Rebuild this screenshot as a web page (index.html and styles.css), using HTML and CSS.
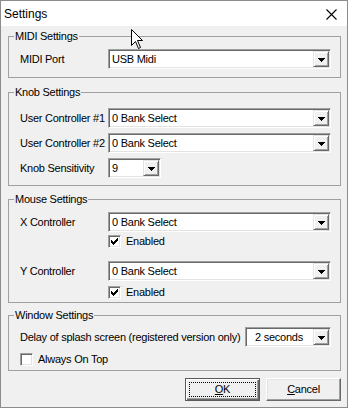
FILE: index.html
```html
<!DOCTYPE html>
<html>
<head>
<meta charset="utf-8">
<link rel="stylesheet" href="styles.css">
</head>
<body>
<div class="window">
  <div class="titlebar">
    <span class="title">Settings</span>
    <svg class="close" width="11" height="11" viewBox="0 0 11 11"><path d="M0.5 0.5 L10.5 10.5 M10.5 0.5 L0.5 10.5" stroke="#000" stroke-width="1.1" fill="none"/></svg>
  </div>
  <div class="content">
    <fieldset class="group g-midi">
      <legend>MIDI Settings</legend>
      <div class="grid">
        <span class="label">MIDI Port</span>
        <div class="combo"><span class="val">USB Midi</span><span class="drop"><svg width="7" height="4" viewBox="0 0 7 4" shape-rendering="crispEdges"><rect x="0" y="0" width="7" height="1"/><rect x="1" y="1" width="5" height="1"/><rect x="2" y="2" width="3" height="1"/><rect x="3" y="3" width="1" height="1"/></svg></span></div>
      </div>
    </fieldset>

    <fieldset class="group g-knob">
      <legend>Knob Settings</legend>
      <div class="grid rows">
        <span class="label">User Controller #1</span>
        <div class="combo"><span class="val">0 Bank Select</span><span class="drop"><svg width="7" height="4" viewBox="0 0 7 4" shape-rendering="crispEdges"><rect x="0" y="0" width="7" height="1"/><rect x="1" y="1" width="5" height="1"/><rect x="2" y="2" width="3" height="1"/><rect x="3" y="3" width="1" height="1"/></svg></span></div>
        <span class="label">User Controller #2</span>
        <div class="combo"><span class="val">0 Bank Select</span><span class="drop"><svg width="7" height="4" viewBox="0 0 7 4" shape-rendering="crispEdges"><rect x="0" y="0" width="7" height="1"/><rect x="1" y="1" width="5" height="1"/><rect x="2" y="2" width="3" height="1"/><rect x="3" y="3" width="1" height="1"/></svg></span></div>
        <span class="label">Knob Sensitivity</span>
        <div class="combo small"><span class="val">9</span><span class="drop"><svg width="7" height="4" viewBox="0 0 7 4" shape-rendering="crispEdges"><rect x="0" y="0" width="7" height="1"/><rect x="1" y="1" width="5" height="1"/><rect x="2" y="2" width="3" height="1"/><rect x="3" y="3" width="1" height="1"/></svg></span></div>
      </div>
    </fieldset>

    <fieldset class="group g-mouse">
      <legend>Mouse Settings</legend>
      <div class="grid">
        <span class="label">X Controller</span>
        <div class="combo"><span class="val">0 Bank Select</span><span class="drop"><svg width="7" height="4" viewBox="0 0 7 4" shape-rendering="crispEdges"><rect x="0" y="0" width="7" height="1"/><rect x="1" y="1" width="5" height="1"/><rect x="2" y="2" width="3" height="1"/><rect x="3" y="3" width="1" height="1"/></svg></span></div>
        <div class="check c-first"><span class="cb"><svg width="7" height="7" viewBox="0 0 7 7" shape-rendering="crispEdges"><rect x="6" y="0" width="1" height="3"/><rect x="5" y="1" width="1" height="3"/><rect x="4" y="2" width="1" height="3"/><rect x="3" y="3" width="1" height="3"/><rect x="2" y="4" width="1" height="3"/><rect x="1" y="3" width="1" height="3"/><rect x="0" y="2" width="1" height="3"/></svg></span><span>Enabled</span></div>
        <span class="label y-label">Y Controller</span>
        <div class="combo y-combo"><span class="val">0 Bank Select</span><span class="drop"><svg width="7" height="4" viewBox="0 0 7 4" shape-rendering="crispEdges"><rect x="0" y="0" width="7" height="1"/><rect x="1" y="1" width="5" height="1"/><rect x="2" y="2" width="3" height="1"/><rect x="3" y="3" width="1" height="1"/></svg></span></div>
        <div class="check c-second"><span class="cb"><svg width="7" height="7" viewBox="0 0 7 7" shape-rendering="crispEdges"><rect x="6" y="0" width="1" height="3"/><rect x="5" y="1" width="1" height="3"/><rect x="4" y="2" width="1" height="3"/><rect x="3" y="3" width="1" height="3"/><rect x="2" y="4" width="1" height="3"/><rect x="1" y="3" width="1" height="3"/><rect x="0" y="2" width="1" height="3"/></svg></span><span>Enabled</span></div>
      </div>
    </fieldset>

    <fieldset class="group g-window">
      <legend>Window Settings</legend>
      <div class="split">
        <span class="label">Delay of splash screen (registered version only)</span>
        <div class="combo delay"><span class="val">2 seconds</span><span class="drop"><svg width="7" height="4" viewBox="0 0 7 4" shape-rendering="crispEdges"><rect x="0" y="0" width="7" height="1"/><rect x="1" y="1" width="5" height="1"/><rect x="2" y="2" width="3" height="1"/><rect x="3" y="3" width="1" height="1"/></svg></span></div>
      </div>
      <div class="check c-top"><span class="cb"></span><span>Always On Top</span></div>
    </fieldset>

    <div class="buttons">
      <div class="btn default"><span><u>O</u>K</span></div>
      <div class="btn"><span><u>C</u>ancel</span></div>
    </div>
  </div>
  <svg class="cursor" width="13" height="20" viewBox="0 0 13 20"><path d="M0.5 0.5 V16.5 L4.5 12.5 L7.5 19.5 L9.5 18.5 L6.5 11.5 H11.5 Z" fill="#fff" stroke="#000" stroke-width="1" stroke-linejoin="miter"/></svg>
</div>
</body>
</html>
```
FILE: styles.css
```css
* { box-sizing: border-box; }
html, body { margin: 0; padding: 0; }
body {
  font-family: "Liberation Sans", Arial, sans-serif;
  font-size: 11px;
  letter-spacing: -0.25px;
  color: #000;
  background: #fff;
}
.window {
  width: 348px;
  height: 408px;
  border: 1px solid #8c8c8c;
  background: #f0f0f0;
  position: relative;
  display: flex;
  flex-direction: column;
}
.titlebar {
  height: 25px;
  flex: none;
  background: #fff;
  display: flex;
  align-items: center;
  justify-content: space-between;
  padding: 0 10px 0 3px;
}
.title { font-size: 12px; letter-spacing: 0; }
.close { display: block; margin-top: 2px; }
.content {
  padding: 4px 6px 0 7px;
  display: flex;
  flex-direction: column;
}
.group {
  margin: 0;
  min-width: 0;
  border: 1px solid #a0a0a0;
  padding: 0 9px 0 11px;
}
.group legend {
  padding: 0 1px;
  margin-left: -6px;
  line-height: 13px;
  height: 13px;
}
.g-midi { padding-top: 6px; padding-bottom: 8px; }
.g-knob { margin-top: 8px; padding-top: 9px; padding-bottom: 7px; }
.g-mouse { margin-top: 7px; padding-top: 6px; padding-bottom: 3px; }
.g-window { margin-top: 6px; padding-top: 5px; padding-bottom: 4px; }

.grid {
  display: grid;
  grid-template-columns: 88px 1fr;
  align-items: center;
}
.rows { row-gap: 5px; }
.label { white-space: nowrap; line-height: 13px; }

.combo {
  height: 20px;
  background: #fff;
  border: 1px solid;
  border-color: #a0a0a0 #fff #fff #a0a0a0;
  box-shadow: inset 1px 1px #696969, inset -1px -1px #e3e3e3;
  padding: 1px;
  display: flex;
  align-items: stretch;
}
.combo.small { width: 53px; }
.combo .val {
  flex: 1;
  padding-left: 2px;
  line-height: 16px;
  white-space: nowrap;
  overflow: hidden;
}
.drop {
  width: 16px;
  flex: none;
  background: #f0f0f0;
  border: 1px solid;
  border-color: #e3e3e3 #696969 #696969 #e3e3e3;
  box-shadow: inset 1px 1px #fff, inset -1px -1px #a0a0a0;
  display: flex;
  align-items: center;
  justify-content: center;
}
.drop svg { display: block; margin-top: 1px; }

.check {
  display: flex;
  align-items: center;
  gap: 5px;
  height: 13px;
  line-height: 13px;
}
.cb {
  width: 13px;
  height: 13px;
  flex: none;
  background: #fff;
  border: 1px solid;
  border-color: #a0a0a0 #fff #fff #a0a0a0;
  box-shadow: inset 1px 1px #696969, inset -1px -1px #e3e3e3;
  display: flex;
  align-items: center;
  justify-content: center;
}
.cb svg { display: block; }
.c-first { grid-column: 2; margin-top: 3px; }
.y-label, .y-combo { margin-top: 13px; }
.c-second { grid-column: 2; margin-top: 5px; }

.split {
  display: flex;
  align-items: center;
  justify-content: space-between;
}
.combo.delay { width: 86px; }
.combo.delay .val { padding-left: 8px; }
.c-top { margin-top: 6px; }

.buttons {
  display: flex;
  justify-content: flex-end;
  gap: 6px;
  margin-top: 7px;
}
.btn {
  position: relative;
  width: 75px;
  height: 23px;
  background: #f0f0f0;
  border: 1px solid;
  border-color: #fff #696969 #696969 #fff;
  box-shadow: inset -1px -1px #a0a0a0, inset 1px 1px #e3e3e3;
  display: flex;
  align-items: center;
  justify-content: center;
  line-height: 13px;
}
.btn.default {
  border-color: #5a5a5a;
  box-shadow: inset 1px 1px #fff, inset -1px -1px #696969, inset -2px -2px #a0a0a0;
}
.btn.default::after {
  content: "";
  position: absolute;
  left: 3px;
  top: 3px;
  right: 3px;
  bottom: 3px;
  border: 1px dotted #000;
}
.cursor {
  position: absolute;
  left: 130px;
  top: 28px;
}
```
